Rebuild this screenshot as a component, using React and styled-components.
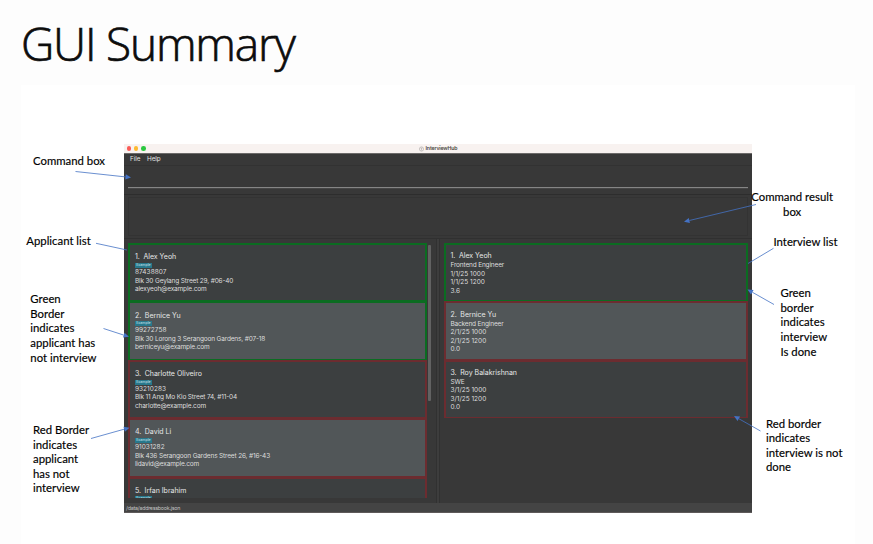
import React from "react";
import styled, { createGlobalStyle } from "styled-components";

const GlobalStyle = createGlobalStyle`
  *, *::before, *::after { box-sizing: border-box; }
  html, body { margin: 0; height: 544px; overflow: hidden; background: #fdfdfd; }
`;

const Page = styled.main`
  display: flex;
  flex-direction: column;
  width: 873px;
  height: 544px;
  padding: 14px 18px 0 21px;
  overflow: hidden;
`;

const Title = styled.h1`
  margin: 0;
  height: 71px;
  font: 300 46px/58px "Open Sans", sans-serif;
  letter-spacing: -1.2px;
  color: #0c0c0c;
  -webkit-text-stroke: 0.7px #0c0c0c;
`;

const Figure = styled.section`
  position: relative;
  flex: 1;
  padding: 59px 0 0 103px;
  background: #fff;
`;

const Window = styled.div`
  display: flex;
  flex-direction: column;
  width: 628px;
  height: 369px;
  background: #383838;
  color: #dcdddd;
  font: 400 6.5px/8.5px Inter, sans-serif;
`;

const TitleBar = styled.header`
  position: relative;
  display: flex;
  align-items: center;
  justify-content: center;
  gap: 2px;
  height: 9px;
  background: #f8f2f0;
  color: #4a4644;
  font-size: 5.2px;
  font-weight: 600;
  letter-spacing: -0.15px;
  flex: none;
`;

const Lights = styled.div`
  position: absolute;
  left: 2.6px;
  top: 2px;
  display: flex;
  gap: 2.7px;
`;

const Light = styled.i`
  width: 4.6px;
  height: 4.6px;
  border-radius: 50%;
  background: ${(p) => p.$color};
`;

const MenuBar = styled.nav`
  display: flex;
  gap: 6.5px;
  height: 13px;
  flex: none;
  padding: 0 0 0 6px;
  border-top: 1px solid #6c6a69;
  border-bottom: 1px solid #323232;
  font-size: 6.3px;
  line-height: 11px;
  color: #e4e4e4;
`;

const CommandArea = styled.div`
  height: 29px;
  flex: none;
  padding: 0 4px 6px;
  border-bottom: 1px solid #2d2d2d;
`;

const CommandInput = styled.div`
  height: 22px;
  border-bottom: 1px solid #858585;
  box-shadow: 0 0.6px 0 #505050;
`;

const ResultArea = styled.div`
  height: 44px;
  flex: none;
  padding: 2px 4px 2px;
  border-bottom: 1px solid #303030;
`;

const ResultBox = styled.div`
  height: 39px;
  border: 1px solid #333;
`;

const Lists = styled.div`
  display: flex;
  flex: 1;
  min-height: 0;
  padding: 4px 4px 5px;
`;

const CardList = styled.div`
  display: flex;
  flex-direction: column;
  flex: none;
  width: ${(p) => p.$width}px;
  overflow: hidden;
`;

const borders = { green: "#0b6c21", red: "#6c2c30" };

const Card = styled.article`
  height: 58.4px;
  flex: none;
  padding: ${(p) => (p.$tagged ? "8.2px" : "7.2px")} 0 0 4.9px;
  border: 2px solid ${(p) => borders[p.$tone]};
  border-bottom-width: 1px;
  background: ${(p) => (p.$alt ? "#515658" : "#3c3f40")};
  white-space: nowrap;
`;

const Name = styled.h2`
  margin: 0;
  display: flex;
  gap: 3.6px;
  font-size: 7px;
  font-weight: 400;
  line-height: 8.5px;
  color: #e6e7e7;
`;

const Tag = styled.span`
  display: block;
  width: 17px;
  height: 5px;
  margin: 1.2px 0 0.2px;
  background: #28788c;
  color: #cfe4ea;
  font-size: 3.6px;
  line-height: 5px;
  text-align: center;
`;

const Line = styled.p`
  margin: 0;
  letter-spacing: ${(p) => (p.$numeric ? "0" : "-0.16px")};
`;

const PhoneLine = styled(Line)`
  letter-spacing: 0.05px;
`;

const Details = styled.div`
  padding-top: 0.5px;
`;

const ScrollTrack = styled.div`
  width: 5px;
  flex: none;
  padding: 2px 1px 0 1px;
`;

const ScrollThumb = styled.div`
  height: 156px;
  border-radius: 1px;
  background: #626262;
`;

const Divider = styled.div`
  width: 4px;
  flex: none;
  margin: -4px 3.5px -5px 4px;
  background: #3d3d3d;
  border-left: 1px solid #313131;
  border-right: 1px solid #313131;
`;

const StatusBar = styled.footer`
  height: 10.5px;
  flex: none;
  padding-left: 2px;
  background: #444;
  border-bottom: 1px solid #5e5a5a;
  color: #c4c4c4;
  font-size: 5.3px;
  line-height: 10px;
  letter-spacing: -0.23px;
`;

const Arrows = styled.svg`
  position: absolute;
  left: -21px;
  top: -85px;
  pointer-events: none;
`;

const Callout = styled.p`
  position: absolute;
  left: ${(p) => p.$x - 21}px;
  top: ${(p) => p.$y - 85}px;
  margin: 0;
  font: 400 11.35px/14.6px Lato, sans-serif;
  color: #000;
  -webkit-text-stroke: 0.15px #000;
  white-space: pre-line;
  text-align: ${(p) => (p.$center ? "center" : "left")};
`;

const applicants = [
  ["Alex Yeoh", "87438807", "Blk 30 Geylang Street 29, #06-40", "alexyeoh@example.com", "green"],
  ["Bernice Yu", "99272758", "Blk 30 Lorong 3 Serangoon Gardens, #07-18", "berniceyu@example.com", "green"],
  ["Charlotte Oliveiro", "93210283", "Blk 11 Ang Mo Kio Street 74, #11-04", "charlotte@example.com", "red"],
  ["David Li", "91031282", "Blk 436 Serangoon Gardens Street 26, #16-43", "lidavid@example.com", "red"],
  ["Irfan Ibrahim", "", "", "", "red"],
];

const interviews = [
  ["Alex Yeoh", "Frontend Engineer", "1/1/25 1000", "1/1/25 1200", "3.6", "green"],
  ["Bernice Yu", "Backend Engineer", "2/1/25 1000", "2/1/25 1200", "0.0", "red"],
  ["Roy Balakrishnan", "SWE", "3/1/25 1000", "3/1/25 1200", "0.0", "red"],
];

const callouts = [
  { x: 33, y: 154, text: "Command box" },
  { x: 26.3, y: 233.5, text: "Applicant list" },
  { x: 30.3, y: 292.3, text: "Green\nBorder\nindicates\napplicant has\nnot interview" },
  { x: 33, y: 423, text: "Red Border\nindicates\napplicant\nhas not\ninterview" },
  { x: 751.3, y: 190, text: "Command result\nbox", center: true },
  { x: 773.5, y: 235, text: "Interview list" },
  { x: 780.5, y: 286.2, text: "Green\nborder\nindicates\ninterview\nIs done" },
  { x: 766, y: 416.6, text: "Red border\nindicates\ninterview is not\ndone" },
];

const arrows = [
  [75.5, 171.5, 131, 177.5, true],
  [96, 243.3, 127, 250, false],
  [103.5, 328.5, 129, 336.8, true],
  [91, 438.5, 129.5, 427.7, true],
  [756, 204.5, 684, 221.8, true],
  [773.5, 248.3, 748, 263.5, false],
  [774, 304.5, 747.5, 289.5, true],
  [760.5, 431, 734, 416, true],
];

function Arrow({ line: [x1, y1, x2, y2, head] }) {
  const length = Math.hypot(x2 - x1, y2 - y1);
  const ux = (x2 - x1) / length;
  const uy = (y2 - y1) / length;
  const bx = x2 - ux * 5.5;
  const by = y2 - uy * 5.5;
  return (
    <g>
      <line x1={x1} y1={y1} x2={head ? bx : x2} y2={head ? by : y2} stroke="#4472c4" strokeWidth="0.8" />
      {head && (
        <polygon
          points={`${x2},${y2} ${bx - uy * 2.6},${by + ux * 2.6} ${bx + uy * 2.6},${by - ux * 2.6}`}
          fill="#4472c4"
        />
      )}
    </g>
  );
}

export default function App() {
  return (
    <Page>
      <GlobalStyle />
      <Title>GUI Summary</Title>
      <Figure>
        <Window>
          <TitleBar>
            <Lights>
              <Light $color="#fb5b57" />
              <Light $color="#fdba31" />
              <Light $color="#2bc840" />
            </Lights>
            <svg width="5" height="6" viewBox="0 0 5 6" fill="none" stroke="#aaa6a4" strokeWidth="0.6">
              <circle cx="2.5" cy="3" r="2.1" />
              <path d="M1.6 2.2h1.8M2.5 2.2v2.2" />
            </svg>
            <span>InterviewHub</span>
          </TitleBar>
          <MenuBar>
            <span>File</span>
            <span>Help</span>
          </MenuBar>
          <CommandArea>
            <CommandInput />
          </CommandArea>
          <ResultArea>
            <ResultBox />
          </ResultArea>
          <Lists>
            <CardList $width={299}>
              {applicants.map(([name, phone, address, email, tone], i) => (
                <Card key={name} $tone={tone} $alt={i % 2 === 1} $tagged>
                  <Name>
                    <span>{i + 1}.</span>
                    <span>{name}</span>
                  </Name>
                  <Tag>Example</Tag>
                  <PhoneLine>{phone}</PhoneLine>
                  <Line>{address}</Line>
                  <Line>{email}</Line>
                </Card>
              ))}
            </CardList>
            <ScrollTrack>
              <ScrollThumb />
            </ScrollTrack>
            <Divider />
            <CardList $width={304.5}>
              {interviews.map(([name, role, start, end, rating, tone], i) => (
                <Card key={name} $tone={tone} $alt={i % 2 === 1}>
                  <Name>
                    <span>{i + 1}.</span>
                    <span>{name}</span>
                  </Name>
                  <Details>
                    <Line>{role}</Line>
                    <Line $numeric>{start}</Line>
                    <Line $numeric>{end}</Line>
                    <Line $numeric>{rating}</Line>
                  </Details>
                </Card>
              ))}
            </CardList>
          </Lists>
          <StatusBar>/data/addressbook.json</StatusBar>
        </Window>
        <Arrows width="873" height="544" viewBox="0 0 873 544">
          {arrows.map((line, i) => (
            <Arrow key={i} line={line} />
          ))}
        </Arrows>
        {callouts.map((c) => (
          <Callout key={c.text} $x={c.x} $y={c.y} $center={c.center}>
            {c.text}
          </Callout>
        ))}
      </Figure>
    </Page>
  );
}
